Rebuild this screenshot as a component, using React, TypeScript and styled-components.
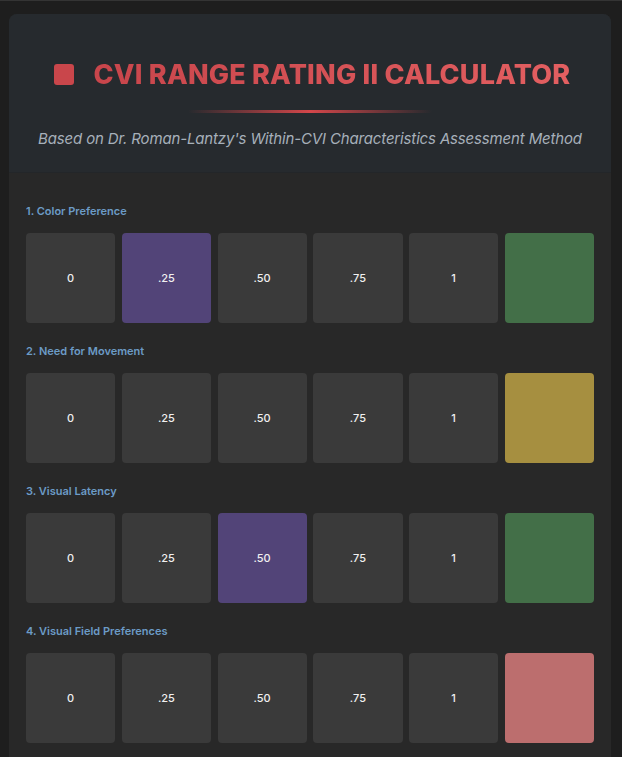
import React from "react";
import styled, { createGlobalStyle } from "styled-components";

const Global = createGlobalStyle`
  html, body { margin: 0; padding: 0; background: #1e1e1e; }
  body { border-top: 1px solid #343434; font-family: Inter, "Noto Sans", sans-serif; }
`;

const Page = styled.div`
  padding: 13px 11px 0 9px;
`;

const Card = styled.div`
  background: #282828;
  border-radius: 8px 8px 0 0;
  overflow: hidden;
`;

const Header = styled.header`
  background: #262a2e;
  height: 159px;
  box-sizing: border-box;
  padding-top: 43px;
  display: flex;
  flex-direction: column;
  align-items: center;
  border-bottom: 1px solid #232629;
`;

const TitleRow = styled.div`
  display: flex;
  align-items: center;
  gap: 20px;
  height: 34px;
  padding-left: 4px;
`;

const Icon = styled.span`
  width: 20px;
  height: 21px;
  border-radius: 3px;
  background: #c9464b;
  display: inline-block;
`;

const Title = styled.h1`
  margin: 0;
  font-family: Inter, sans-serif;
  font-size: 27px;
  font-weight: 800;
  letter-spacing: 0.2px;
  background: linear-gradient(90deg, #c8454b, #e35f61);
  -webkit-background-clip: text;
  background-clip: text;
  color: transparent;
`;

const Divider = styled.div`
  width: 244px;
  height: 3px;
  margin-top: 19px;
  background: linear-gradient(90deg, rgba(212,70,74,0), #d4464a 50%, rgba(212,70,74,0));
`;

const Subtitle = styled.p`
  margin: 16px 0 0;
  font-family: Inter, sans-serif;
  font-style: italic;
  font-size: 15px;
  letter-spacing: -0.15px;
  color: #a6b0ba;
`;

const Body = styled.main`
  padding: 31px 17px 28px;
  display: flex;
  flex-direction: column;
  gap: 21px;
`;

const Section = styled.section`
  display: flex;
  flex-direction: column;
  gap: 15px;
`;

const Label = styled.h2`
  margin: 0;
  font-family: Inter, sans-serif;
  font-size: 11px;
  font-weight: 600;
  color: #6c9bc6;
  line-height: 14px;
`;

const Grid = styled.div`
  display: grid;
  grid-template-columns: repeat(6, 1fr);
  gap: 6.5px;
`;

const Cell = styled.div<{ $bg?: string }>`
  height: 90px;
  border-radius: 4px;
  background: ${(p) => p.$bg ?? "#3a3a3a"};
  display: flex;
  align-items: center;
  justify-content: center;
  color: #f0f0f0;
  font-family: Inter, sans-serif;
  font-size: 11px;
  font-weight: 500;
`;

const values = ["0", ".25", ".50", ".75", "1"];

const rows = [
  { label: "1. Color Preference", sel: 1, result: "#436f48" },
  { label: "2. Need for Movement", sel: -1, result: "#a68f40" },
  { label: "3. Visual Latency", sel: 2, result: "#436f48" },
  { label: "4. Visual Field Preferences", sel: -1, result: "#bc6e6e" },
];

export default function App() {
  return (
    <>
      <Global />
      <Page>
        <Card>
          <Header>
            <TitleRow>
              <Icon />
              <Title>CVI RANGE RATING II CALCULATOR</Title>
            </TitleRow>
            <Divider />
            <Subtitle>Based on Dr. Roman-Lantzy's Within-CVI Characteristics Assessment Method</Subtitle>
          </Header>
          <Body>
            {rows.map((r) => (
              <Section key={r.label}>
                <Label>{r.label}</Label>
                <Grid>
                  {values.map((v, i) => (
                    <Cell key={v} $bg={i === r.sel ? "#524478" : undefined}>
                      {v}
                    </Cell>
                  ))}
                  <Cell $bg={r.result} />
                </Grid>
              </Section>
            ))}
          </Body>
        </Card>
      </Page>
    </>
  );
}
